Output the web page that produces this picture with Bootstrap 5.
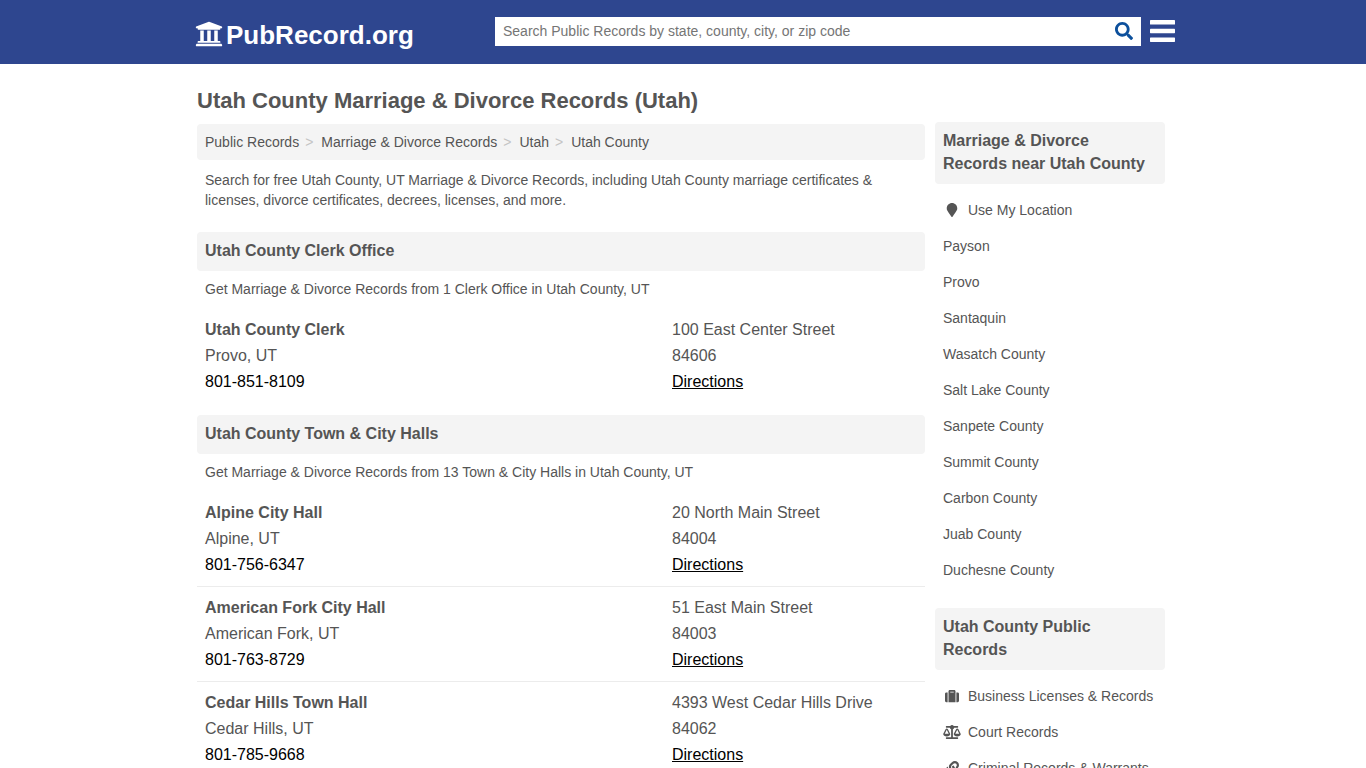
<!DOCTYPE html>
<html lang="en">
<head>
<meta charset="utf-8">
<meta name="viewport" content="width=device-width, initial-scale=1">
<title>Utah County Marriage &amp; Divorce Records (Utah)</title>
<link href="https://cdn.jsdelivr.net/npm/bootstrap@5.3.0/dist/css/bootstrap.min.css" rel="stylesheet">
<style>
body { font-family: "Liberation Sans", Arial, sans-serif; font-size: 16px; line-height: 26px; color: #555; }
a { color: inherit; text-decoration: none; }
.site-header { background: #2e468f; padding: 11px 0 13px; }
.wrap { max-width: 980px; }
.brand { width: 302px; font-size: 26px; line-height: 32px; gap: 3px; padding-left: 2px; padding-top: 8px; }
.brand svg { margin-bottom: 2px; }
.search-box { height: 29px; background: #fff; }
.search-box input { font-size: 14px; line-height: 20px; padding: 4px 8px; color: #505050; }
.search-box input::placeholder { color: #757575; }
.search-box button { width: 34px; color: #0c509c; }
.menu-btn { margin: 0 -2px 0 9px; }
.page { padding: 22px 8px 0 4px; }
.main-col { min-width: 0; }
h1 { font-size: 22px; line-height: 30px; font-weight: 700; margin: 0 0 8px; }
.crumbs { background: #f4f4f4; border-radius: 4px; padding: 8px; font-size: 14px; line-height: 20px; margin: 0; --bs-breadcrumb-item-padding-x: 0; }
.crumbs .breadcrumb-item + .breadcrumb-item::before { content: ">"; color: #c4c4c4; padding: 0; margin: 0 8px 0 6px; }
.note { font-size: 14px; line-height: 20px; padding: 0 8px; margin: 0; }
.intro { padding-top: 10px; }
.bar-title { background: #f4f4f4; border-radius: 4px; font-size: 16px; line-height: 23px; font-weight: 700; padding: 7px 8px 9px; margin: 0; }
.group { padding-top: 22px; }
.group .note { padding-top: 8px; padding-bottom: 10px; }
.group + .group { padding-top: 12px; }
.office { padding: 8px 0; border-bottom: 1px solid #ececec; }
.office:last-child { border-bottom: 0; }
.office > div { padding: 0 8px; }
.office .place { flex: 0 0 261px; }
.office a { color: #000; }
.side-col { flex: 0 0 230px; margin-left: 10px; padding-top: 36px; }
.side-list { font-size: 14px; line-height: 20px; margin: 8px 0 20px; }
.side-list a { padding: 8px; }
.side-list svg { width: 18px; height: 14px; margin-right: 7px; flex: none; }
</style>
</head>
<body>
<header class="site-header">
  <div class="wrap container-fluid px-0 d-flex align-items-center">
    <a href="#" class="brand d-flex align-items-center text-white fw-bold">
      <svg width="28" height="28" viewBox="0 0 512 512" fill="currentColor" aria-hidden="true"><path d="M496 128v16a8 8 0 0 1-8 8h-24v12c0 6.627-5.373 12-12 12H60c-6.627 0-12-5.373-12-12v-12H24a8 8 0 0 1-8-8v-16a8 8 0 0 1 4.941-7.392l232-88a7.996 7.996 0 0 1 6.118 0l232 88A8 8 0 0 1 496 128zm-24 304H40c-13.255 0-24 10.745-24 24v16a8 8 0 0 0 8 8h464a8 8 0 0 0 8-8v-16c0-13.255-10.745-24-24-24zM96 192v192H60c-6.627 0-12 5.373-12 12v20h416v-20c0-6.627-5.373-12-12-12h-36V192h-64v192h-64V192h-64v192h-64V192H96z"/></svg>
      <span>PubRecord.org</span>
    </a>
    <form class="search-box d-flex flex-grow-1" role="search">
      <input type="text" class="flex-grow-1 border-0 bg-transparent" aria-label="Search public records" placeholder="Search Public Records by state, county, city, or zip code">
      <button type="button" class="border-0 bg-transparent p-0 d-flex align-items-center justify-content-center" aria-label="Search"><svg width="18" height="18" viewBox="0 0 512 512" fill="currentColor"><path d="M505 442.7L405.3 343c-4.5-4.5-10.6-7-17-7H372c27.6-35.3 44-79.7 44-128C416 93.1 322.9 0 208 0S0 93.1 0 208s93.1 208 208 208c48.3 0 92.7-16.4 128-44v16.3c0 6.4 2.5 12.5 7 17l99.7 99.7c9.4 9.4 24.6 9.4 33.9 0l28.3-28.3c9.4-9.4 9.4-24.6.1-34zM208 336c-70.7 0-128-57.2-128-128 0-70.7 57.2-128 128-128 70.7 0 128 57.2 128 128 0 70.7-57.2 128-128 128z"/></svg></button>
    </form>
    <button type="button" class="menu-btn border-0 bg-transparent p-0 d-flex" aria-label="Menu"><svg width="25" height="26" viewBox="0 0 25 26" fill="#fff"><rect y="2" width="25" height="4.5" rx=".6"/><rect y="10.7" width="25" height="4.5" rx=".6"/><rect y="19.4" width="25" height="4.5" rx=".6"/></svg></button>
  </div>
</header>

<div class="wrap page container-fluid d-flex">
  <main class="main-col flex-grow-1">
    <h1>Utah County Marriage &amp; Divorce Records (Utah)</h1>
    <nav aria-label="Breadcrumb">
      <ol class="breadcrumb crumbs">
        <li class="breadcrumb-item"><a href="#">Public Records</a></li>
        <li class="breadcrumb-item"><a href="#">Marriage &amp; Divorce Records</a></li>
        <li class="breadcrumb-item"><a href="#">Utah</a></li>
        <li class="breadcrumb-item"><a href="#">Utah County</a></li>
      </ol>
    </nav>
    <p class="note intro">Search for free Utah County, UT Marriage &amp; Divorce Records, including Utah County marriage certificates &amp; licenses, divorce certificates, decrees, licenses, and more.</p>

    <section class="group">
      <h2 class="bar-title">Utah County Clerk Office</h2>
      <p class="note">Get Marriage &amp; Divorce Records from 1 Clerk Office in Utah County, UT</p>
      <div class="office d-flex">
        <div class="flex-grow-1"><strong class="d-block">Utah County Clerk</strong>Provo, UT<br><a href="tel:801-851-8109">801-851-8109</a></div>
        <div class="place">100 East Center Street<br>84606<br><a href="#" class="text-decoration-underline">Directions</a></div>
      </div>
    </section>

    <section class="group">
      <h2 class="bar-title">Utah County Town &amp; City Halls</h2>
      <p class="note">Get Marriage &amp; Divorce Records from 13 Town &amp; City Halls in Utah County, UT</p>
      <div class="office d-flex">
        <div class="flex-grow-1"><strong class="d-block">Alpine City Hall</strong>Alpine, UT<br><a href="tel:801-756-6347">801-756-6347</a></div>
        <div class="place">20 North Main Street<br>84004<br><a href="#" class="text-decoration-underline">Directions</a></div>
      </div>
      <div class="office d-flex">
        <div class="flex-grow-1"><strong class="d-block">American Fork City Hall</strong>American Fork, UT<br><a href="tel:801-763-8729">801-763-8729</a></div>
        <div class="place">51 East Main Street<br>84003<br><a href="#" class="text-decoration-underline">Directions</a></div>
      </div>
      <div class="office d-flex">
        <div class="flex-grow-1"><strong class="d-block">Cedar Hills Town Hall</strong>Cedar Hills, UT<br><a href="tel:801-785-9668">801-785-9668</a></div>
        <div class="place">4393 West Cedar Hills Drive<br>84062<br><a href="#" class="text-decoration-underline">Directions</a></div>
      </div>
    </section>
  </main>

  <aside class="side-col">
    <h2 class="bar-title">Marriage &amp; Divorce Records near Utah County</h2>
    <ul class="side-list list-unstyled">
      <li><a href="#" class="d-flex align-items-center"><svg viewBox="0 0 384 512" fill="currentColor" aria-hidden="true"><path d="M172.268 501.67C26.97 291.031 0 269.413 0 192 0 85.961 85.961 0 192 0s192 85.961 192 192c0 77.413-26.97 99.031-172.268 309.67-9.535 13.774-29.93 13.773-39.464 0z"/></svg>Use My Location</a></li>
      <li><a href="#" class="d-block">Payson</a></li>
      <li><a href="#" class="d-block">Provo</a></li>
      <li><a href="#" class="d-block">Santaquin</a></li>
      <li><a href="#" class="d-block">Wasatch County</a></li>
      <li><a href="#" class="d-block">Salt Lake County</a></li>
      <li><a href="#" class="d-block">Sanpete County</a></li>
      <li><a href="#" class="d-block">Summit County</a></li>
      <li><a href="#" class="d-block">Carbon County</a></li>
      <li><a href="#" class="d-block">Juab County</a></li>
      <li><a href="#" class="d-block">Duchesne County</a></li>
    </ul>
    <h2 class="bar-title">Utah County Public Records</h2>
    <ul class="side-list list-unstyled mb-0">
      <li><a href="#" class="d-flex align-items-center"><svg viewBox="0 0 512 512" fill="currentColor" aria-hidden="true"><path d="M128 480h256V80c0-26.5-21.5-48-48-48H176c-26.5 0-48 21.5-48 48v400zm64-384h128v32H192V96zm320 80v256c0 26.5-21.5 48-48 48h-48V128h48c26.5 0 48 21.5 48 48zM96 480H48c-26.5 0-48-21.5-48-48V176c0-26.5 21.5-48 48-48h48v352z"/></svg>Business Licenses &amp; Records</a></li>
      <li><a href="#" class="d-flex align-items-center"><svg viewBox="0 0 640 512" fill="currentColor" aria-hidden="true"><path d="M256 336h-.02c0-16.18 1.34-8.73-85.05-181.51-17.65-35.29-68.19-35.36-85.87 0C-2.06 328.75.02 320.33.02 336H0c0 44.18 57.31 80 128 80s128-35.82 128-80zM128 176l72 144H56l72-144zm511.98 160c0-16.18 1.34-8.73-85.05-181.51-17.65-35.29-68.19-35.36-85.87 0-87.12 174.26-85.04 165.84-85.04 181.51H384c0 44.18 57.31 80 128 80s128-35.82 128-80h-.02zM440 320l72-144 72 144H440zm88 128H352V153.25c23.51-10.29 41.16-31.48 46.39-57.25H528c8.84 0 16-7.16 16-16V48c0-8.84-7.16-16-16-16H383.64C369.04 12.68 346.09 0 320 0s-49.04 12.68-63.64 32H112c-8.84 0-16 7.16-16 16v32c0 8.84 7.16 16 16 16h129.61c5.23 25.76 22.87 46.96 46.39 57.25V448H112c-8.84 0-16 7.16-16 16v32c0 8.84 7.16 16 16 16h416c8.84 0 16-7.16 16-16v-32c0-8.84-7.16-16-16-16z"/></svg>Court Records</a></li>
      <li><a href="#" class="d-flex align-items-center"><svg viewBox="0 0 512 512" fill="currentColor" aria-hidden="true"><path d="M326.612 185.391c59.747 59.809 58.927 155.698.36 214.59-.11.12-.24.25-.36.37l-67.2 67.2c-59.27 59.27-155.699 59.262-214.96 0-59.27-59.26-59.27-155.7 0-214.96l37.106-37.106c9.84-9.84 26.786-3.3 27.294 10.606.648 17.722 3.826 35.527 9.69 52.721 1.986 5.822.567 12.262-3.783 16.612l-13.087 13.087c-28.026 28.026-28.905 73.66-1.155 101.96 28.024 28.579 74.086 28.749 102.325.51l67.2-67.19c28.191-28.191 28.073-73.757 0-101.83-3.701-3.694-7.429-6.564-10.341-8.569a16.037 16.037 0 0 1-6.947-12.606c-.396-10.567 3.348-21.456 11.698-29.806l21.054-21.055c5.521-5.521 14.182-6.199 20.584-1.731a152.482 152.482 0 0 1 20.522 17.197zM467.547 44.449c-59.261-59.262-155.69-59.27-214.96 0l-67.2 67.2c-.12.12-.25.25-.36.37-58.566 58.892-59.387 154.781.36 214.59a152.454 152.454 0 0 0 20.521 17.196c6.402 4.468 15.064 3.789 20.584-1.731l21.054-21.055c8.35-8.35 12.094-19.239 11.698-29.806a16.037 16.037 0 0 0-6.947-12.606c-2.912-2.005-6.64-4.875-10.341-8.569-28.073-28.073-28.191-73.639 0-101.83l67.2-67.19c28.239-28.239 74.3-28.069 102.325.51 27.75 28.3 26.872 73.934-1.155 101.96l-13.087 13.087c-4.35 4.35-5.769 10.79-3.783 16.612 5.864 17.194 9.042 34.999 9.69 52.721.509 13.906 17.454 20.446 27.294 10.606l37.106-37.106c59.271-59.259 59.271-155.699.001-214.959z"/></svg>Criminal Records &amp; Warrants</a></li>
    </ul>
  </aside>
</div>
<script src="https://cdn.jsdelivr.net/npm/bootstrap@5.3.0/dist/js/bootstrap.bundle.min.js"></script>
</body>
</html>
